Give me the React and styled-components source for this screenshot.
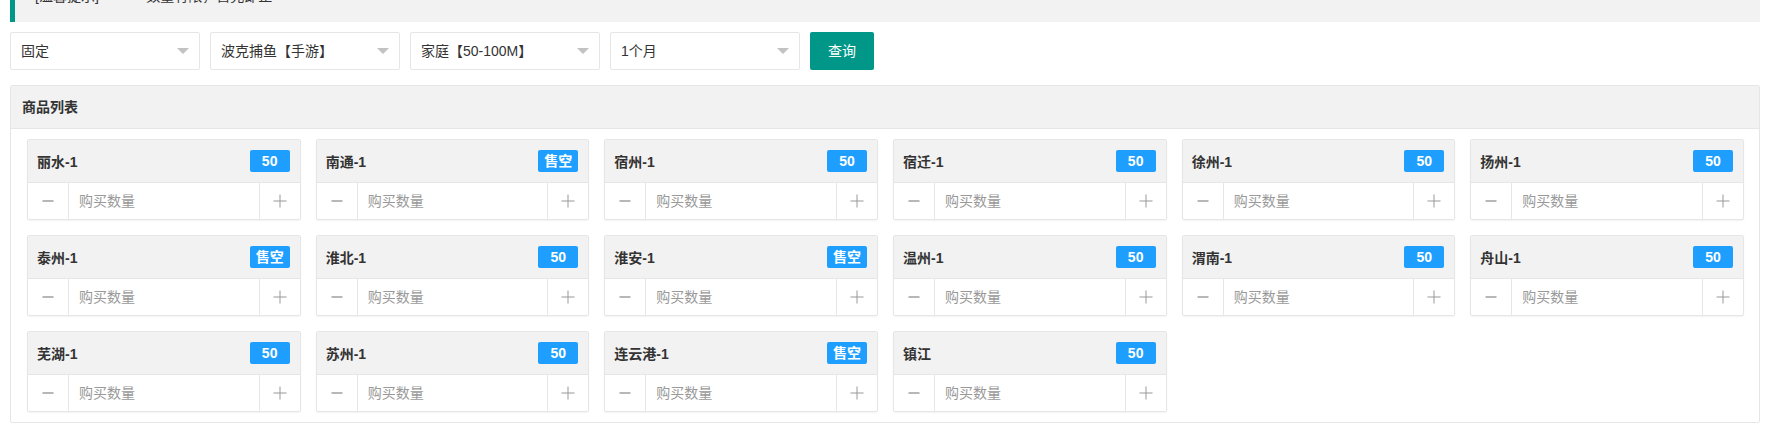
import React from "react";
import styled, { createGlobalStyle } from "styled-components";

const Global = createGlobalStyle`
  html, body { margin: 0; padding: 0; background: #fff; }
  body {
    font-family: "Liberation Sans", Arial, "Noto Sans CJK SC", sans-serif;
    font-size: 14px;
    color: #333;
    overflow: hidden;
  }
`;

const Page = styled.div`
  width: 1750px;
  padding-left: 10px;
  height: 427px;
  overflow: hidden;
`;

const Quote = styled.div`
  margin-top: -30px;
  padding: 15px 15px 15px 20px;
  line-height: 22px;
  border-left: 5px solid #009688;
  background: #f2f2f2;
  color: #333;
`;

const Toolbar = styled.div`
  display: flex;
  gap: 10px;
  margin-top: 10px;
  height: 38px;
`;

const Select = styled.div`
  position: relative;
  box-sizing: border-box;
  width: 190px;
  height: 38px;
  border: 1px solid #e6e6e6;
  border-radius: 2px;
  background: #fff;
  line-height: 36px;
  padding-left: 10px;
  color: #333;
  &::after {
    content: "";
    position: absolute;
    right: 10px;
    top: 50%;
    margin-top: -3px;
    border-width: 6px 6px 0 6px;
    border-style: solid;
    border-color: #c2c2c2 transparent transparent transparent;
  }
`;

const Button = styled.button`
  height: 38px;
  padding: 0 18px;
  border: none;
  border-radius: 2px;
  background: #009688;
  color: #fff;
  font-family: inherit;
  font-size: 14px;
  line-height: 38px;
`;

const Panel = styled.div`
  margin-top: 15px;
  border: 1px solid #e6e6e6;
  border-radius: 2px;
`;

const PanelHeader = styled.div`
  height: 42px;
  line-height: 42px;
  padding: 0 11px;
  background: #f2f2f2;
  border-bottom: 1px solid #e6e6e6;
  font-weight: bold;
  color: #333;
`;

const PanelBody = styled.div`
  padding: 10px 15px 10px 16px;
  display: grid;
  grid-template-columns: repeat(6, minmax(0, 1fr));
  column-gap: 15px;
  row-gap: 15px;
`;

const Card = styled.div`
  min-width: 0;
  border: 1px solid #e6e6e6;
  border-radius: 2px;
  background: #fff;
  box-shadow: 0 1px 2px 0 rgba(0, 0, 0, 0.05);
`;

const CardHeader = styled.div`
  display: flex;
  align-items: center;
  justify-content: space-between;
  height: 42px;
  padding: 0 10px 0 9px;
  background: #f2f2f2;
  border-bottom: 1px solid #e6e6e6;
`;

const Title = styled.span`
  font-weight: bold;
  color: #333;
`;

const Badge = styled.span`
  width: 40px;
  height: 22px;
  line-height: 22px;
  text-align: center;
  border-radius: 2px;
  background: #1e9fff;
  color: #fff;
  font-weight: bold;
  font-size: 14px;
`;

const InputRow = styled.div`
  display: flex;
  height: 36px;
`;

const Step = styled.div`
  width: 40px;
  flex: none;
  display: flex;
  align-items: center;
  justify-content: center;
  border-${(p) => (p.$side === "left" ? "right" : "left")}: 1px solid #e6e6e6;
`;

const Qty = styled.input`
  flex: 1;
  width: 0;
  min-width: 0;
  border: none;
  outline: none;
  padding: 0 10px;
  font-family: inherit;
  font-size: 14px;
  color: #333;
  background: transparent;
  &::placeholder { color: #999; }
`;

const Minus = () => (
  <svg width="12" height="12" viewBox="0 0 12 12">
    <rect x="0.5" y="5.25" width="11" height="1.5" fill="#a0a0a0" />
  </svg>
);

const Plus = () => (
  <svg width="14" height="14" viewBox="0 0 14 14">
    <rect x="0.5" y="6.5" width="13" height="1" fill="#999" />
    <rect x="6.5" y="0.5" width="1" height="13" fill="#999" />
  </svg>
);

const items = [
  ["丽水-1", "50"], ["南通-1", "售空"], ["宿州-1", "50"], ["宿迁-1", "50"], ["徐州-1", "50"], ["扬州-1", "50"],
  ["泰州-1", "售空"], ["淮北-1", "50"], ["淮安-1", "售空"], ["温州-1", "50"], ["渭南-1", "50"], ["舟山-1", "50"],
  ["芜湖-1", "50"], ["苏州-1", "50"], ["连云港-1", "售空"], ["镇江", "50"],
];

export default function App() {
  return (
    <>
      <Global />
      <Page>
        <Quote>[温馨提示]&nbsp;&nbsp;&nbsp;&nbsp;—— 数量有限，售完即止</Quote>
        <Toolbar>
          <Select>固定</Select>
          <Select>波克捕鱼【手游】</Select>
          <Select>家庭【50-100M】</Select>
          <Select>1个月</Select>
          <Button>查询</Button>
        </Toolbar>
        <Panel>
          <PanelHeader>商品列表</PanelHeader>
          <PanelBody>
            {items.map(([name, badge]) => (
              <Card key={name}>
                <CardHeader>
                  <Title>{name}</Title>
                  <Badge>{badge}</Badge>
                </CardHeader>
                <InputRow>
                  <Step $side="left"><Minus /></Step>
                  <Qty placeholder="购买数量" />
                  <Step $side="right"><Plus /></Step>
                </InputRow>
              </Card>
            ))}
          </PanelBody>
        </Panel>
      </Page>
    </>
  );
}
